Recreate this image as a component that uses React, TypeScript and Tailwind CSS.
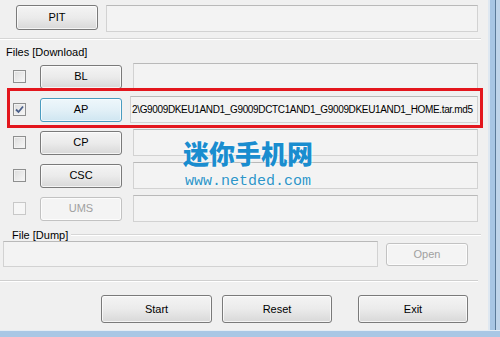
import React from "react";

const font = { fontFamily: '"Liberation Sans", Arial, sans-serif' };

function Button({ label, className = "", disabled = false, focused = false }: { label: string; className?: string; disabled?: boolean; focused?: boolean }) {
  const tone = disabled
    ? "border-[#c2c2c2] bg-[#f4f4f4] text-[#a0a0a0]"
    : focused
    ? "border-[#4a9cc0] bg-gradient-to-b from-[#eef7fb] via-[#e2f0f7] to-[#cfe6f1] text-black"
    : "border-[#7a7a7a] bg-gradient-to-b from-[#f4f4f4] via-[#ebebeb] to-[#d8d8d8] text-black";
  return (
    <div className={`flex items-center justify-center rounded-[3px] border text-[11px] shadow-[inset_0_0_0_1px_rgba(255,255,255,0.7)] ${tone} ${className}`}>
      {label}
    </div>
  );
}

function Field({ className = "", children }: { className?: string; children?: React.ReactNode }) {
  return (
    <div className={`flex items-center overflow-hidden whitespace-nowrap border border-[#d2d2d2] border-t-[#b9b9b9] bg-[#f3f3f3] text-[10px] tracking-[-0.35px] text-black ${className}`}>
      {children}
    </div>
  );
}

function Check({ checked = false, disabled = false }: { checked?: boolean; disabled?: boolean }) {
  return (
    <div
      className={`flex h-[13px] w-[13px] items-center justify-center border ${
        disabled ? "border-[#c8c8c8] bg-[#f6f6f6]" : "border-[#8e8f8f] bg-gradient-to-br from-[#dcdcdc] to-[#f8f8f8] shadow-[inset_0_0_0_1px_#f2f2f2]"
      }`}
    >
      {checked && (
        <svg width="9" height="9" viewBox="0 0 9 9">
          <path d="M1 4.5 L3.5 7 L8 1.5" fill="none" stroke="#4a5f8a" strokeWidth="1.8" />
        </svg>
      )}
    </div>
  );
}

const rows = [
  { name: "BL" },
  { name: "AP", checked: true, focused: true, path: "2\\G9009DKEU1AND1_G9009DCTC1AND1_G9009DKEU1AND1_HOME.tar.md5" },
  { name: "CP" },
  { name: "CSC" },
  { name: "UMS", disabled: true },
];

export default function App() {
  return (
    <div className="flex h-[337px] w-[500px] flex-col overflow-hidden" style={font}>
      <div className="flex h-[330px]">
        {/* Dialog body */}
        <div className="relative flex w-[488px] flex-col bg-[#f0f0f0]">
          {/* PIT */}
          <div className="mt-[5px] flex items-start pl-[16px] pr-[10px]">
            <Button label="PIT" className="h-[25px] w-[82px]" />
            <Field className="ml-[8px] h-[27px] flex-1" />
          </div>

          <div className="mt-[6px] h-px w-[481px] bg-[#d6d6d6]" />
          <div className="h-px w-[481px] bg-white" />

          <div className="mt-[6px] h-[12px] pl-[6px] text-[11px] leading-[12px] text-black">Files [Download]</div>

          <div className="mt-[5px] flex flex-col gap-[6px]">
            {rows.map((r) => (
              <div key={r.name} className="flex h-[27px] items-center pr-[10px]">
                <div className="ml-[13px]">
                  <Check checked={r.checked} disabled={r.disabled} />
                </div>
                <Button label={r.name} className="ml-[14px] h-[24px] w-[82px]" disabled={r.disabled} focused={r.focused} />
                <Field className={`h-[27px] flex-1 ${r.path ? "ml-[8px] pl-[1px]" : "ml-[11px]"}`}>{r.path}</Field>
              </div>
            ))}
          </div>

          {/* File [Dump] */}
          <div className="mt-[7px] flex h-[12px] items-center pl-[12px]">
            <span className="text-[11px] leading-[12px] text-black">File [Dump]</span>
            <div className="ml-[3px] flex-1 pr-[7px]">
              <div className="h-px bg-[#d6d6d6]" />
              <div className="h-px bg-white" />
            </div>
          </div>
          <div className="flex items-center pl-[3px]">
            <Field className="h-[26px] w-[375px]" />
            <Button label="Open" className="ml-[8px] h-[23px] w-[82px]" disabled />
          </div>

          <div className="mt-[13px] h-px w-[478px] bg-[#cfcfcf]" />
          <div className="h-px w-[478px] bg-white" />

          <div className="mt-[13px] flex pl-[101px]">
            <Button label="Start" className="h-[28px] w-[111px]" />
            <Button label="Reset" className="ml-[10px] h-[28px] w-[110px]" />
            <Button label="Exit" className="ml-[26px] h-[28px] w-[110px]" />
          </div>

          {/* Highlight */}
          <div className="absolute left-[7px] top-[88px] h-[40px] w-[476px] border-[3px] border-[#e3161d]" />

          {/* Watermark */}
          <div className="pointer-events-none absolute left-[183px] top-[138px] flex flex-col items-center">
            <div
              className="text-[26px] font-black leading-[30px] text-[#1a8dcf] [text-shadow:0_0_3px_#ffffff]"
              style={{ fontFamily: '"Noto Sans CJK SC", sans-serif' }}
            >
              迷你手机网
            </div>
            <div
              className="mt-[6px] text-[15px] leading-[16px] text-[#2e95c8] [text-shadow:0_0_2px_#ffffff]"
              style={{ fontFamily: '"Liberation Mono", monospace' }}
            >
              www.netded.com
            </div>
          </div>
        </div>

        {/* Window frame right */}
        <div className="flex w-[12px]">
          <div className="w-[2px] bg-[#dfe8f1]" />
          <div className="w-[5px] bg-[#a8c6e4]" />
          <div className="w-px bg-[#5c7b99]" />
          <div className="w-[4px] bg-[#c0d5ea]" />
        </div>
      </div>
      {/* Window frame bottom */}
      <div className="flex h-[7px] flex-col">
        <div className="h-px bg-[#e4ecf4]" />
        <div className="flex-1 bg-[#a9c7e5]" />
      </div>
    </div>
  );
}
